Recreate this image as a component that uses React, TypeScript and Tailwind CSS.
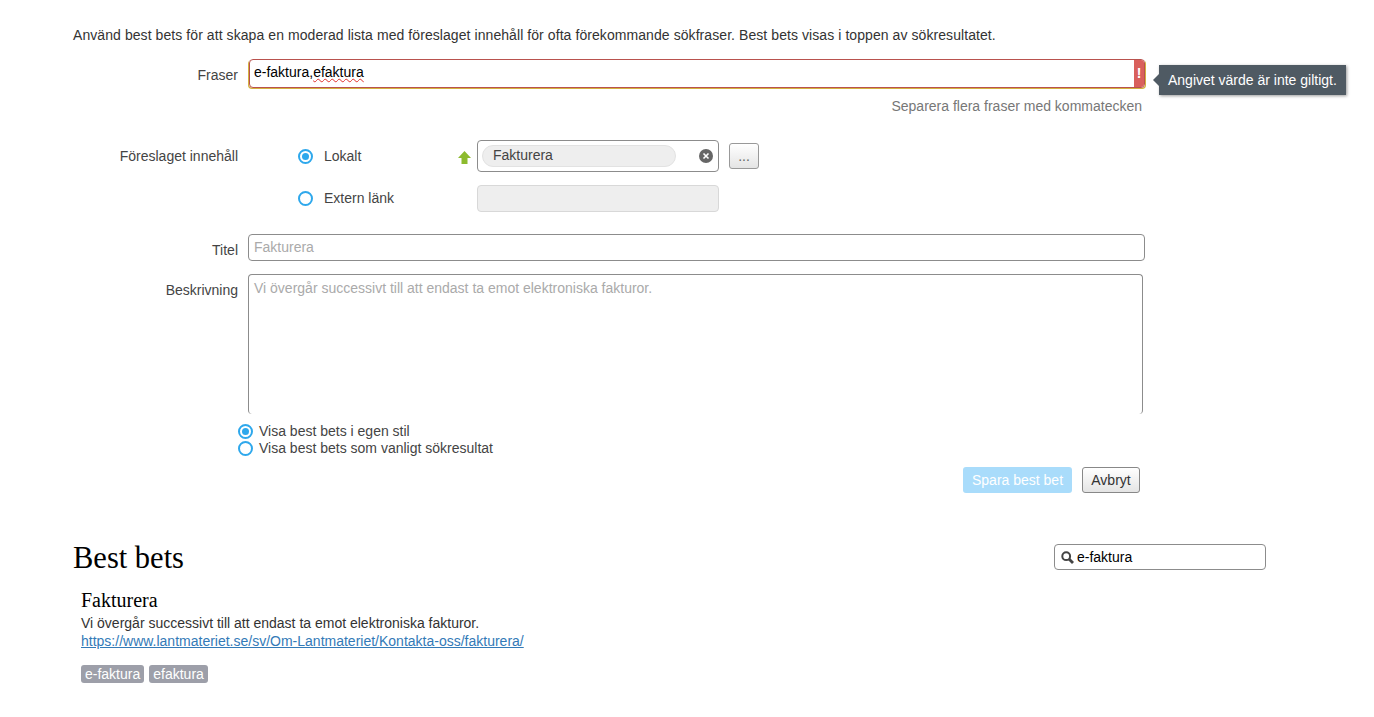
const sans = "font-['Liberation_Sans',Arial,sans-serif]"

function Radio({ checked }: { checked?: boolean }) {
  return (
    <span className="flex h-[15px] w-[15px] shrink-0 items-center justify-center rounded-full border-2 border-[#2ea8ec] bg-white">
      {checked && <span className="h-[7px] w-[7px] rounded-full bg-[#2ea8ec]" />}
    </span>
  )
}

function Label({ children }: { children: React.ReactNode }) {
  return <div className="w-[165px] shrink-0 text-right text-[#444]">{children}</div>
}

function BestBetForm() {
  return (
    <form className="w-[1146px]">
      <p className="tracking-[0.073px] text-[#333]">
        Använd best bets för att skapa en moderad lista med föreslaget innehåll för ofta förekommande sökfraser. Best bets visas i toppen av sökresultatet.
      </p>

      <div className="mt-[15px] flex">
        <Label><span className="mt-[8px] block">Fraser</span></Label>
        <div className="ml-[11px] flex h-[29px] w-[896px] overflow-hidden rounded-[4px] border border-[#b9524e] shadow-[-1px_1px_0_#d4b13f,1px_1px_0_#d4b13f]">
          <div className="flex-1 pl-[4px] pt-[4px] text-black">
            e-faktura,<span className="underline decoration-[#e0302a] decoration-wavy decoration-1">efaktura</span>
          </div>
          <div className="flex w-[10px] items-center justify-center bg-[#d9605c] pb-[1px] text-[14px] font-bold text-white">!</div>
        </div>
      </div>
      <p className="mt-[10px] w-[1069px] text-right text-[#777]">Separera flera fraser med kommatecken</p>

      <div className="mt-[25px] flex">
        <Label><span className="mt-[8px] block">Föreslaget innehåll</span></Label>
        <div className="ml-[60px] flex w-[150px] flex-col">
          <div className="flex h-[32px] items-center gap-[11px]">
            <Radio checked />
            <span className="text-[#444]">Lokalt</span>
          </div>
          <div className="mt-[13px] flex h-[27px] items-center gap-[11px]">
            <Radio />
            <span className="text-[#444]">Extern länk</span>
          </div>
        </div>
        <div className="flex flex-col">
          <div className="flex items-center">
            <svg className="ml-[10px] mt-[2px] h-[13px] w-[13px]" viewBox="0 0 13 13">
              <path d="M6.5 0 13 7H9.5v6h-6V7H0z" fill="#8dbb2e" />
            </svg>
            <div className="ml-[6px] flex h-[32px] w-[242px] items-center rounded-[4px] border border-[#8c8c8c] pl-[4px] pr-[5px]">
              <span className="flex h-[22px] w-[194px] items-center rounded-full border border-[#e2e2e2] bg-[#eeeeee] pb-[1px] pl-[10px] text-[#444]">Fakturera</span>
              <svg className="ml-auto h-[14px] w-[14px]" viewBox="0 0 14 14">
                <circle cx="7" cy="7" r="7" fill="#666" />
                <path d="M4.5 4.5l5 5M9.5 4.5l-5 5" stroke="#fff" strokeWidth="1.6" />
              </svg>
            </div>
            <button type="button" className="ml-[10px] h-[26px] w-[30px] rounded-[3px] border border-[#999] bg-gradient-to-b from-white to-[#e4e4e4] text-[#666]">...</button>
          </div>
          <div className="ml-[29px] mt-[13px] h-[27px] w-[242px] rounded-[4px] border border-[#d8d8d8] bg-[#eeeeee]" />
        </div>
      </div>

      <div className="mt-[22px] flex">
        <Label><span className="mt-[8px] block">Titel</span></Label>
        <input readOnly placeholder="Fakturera" className="ml-[10px] h-[27px] w-[897px] rounded-[4px] border border-[#8c8c8c] px-[5px] pb-[2px] placeholder:text-[#aaa]" />
      </div>

      <div className="mt-[13px] flex">
        <Label><span className="mt-[8px] block">Beskrivning</span></Label>
        <textarea readOnly placeholder="Vi övergår successivt till att endast ta emot elektroniska fakturor." className="ml-[10px] h-[140px] w-[895px] resize-none rounded-[4px] border border-b-0 border-[#8c8c8c] px-[5px] py-[5px] placeholder:text-[#aaa]" />
      </div>

      <div className="ml-[165px] mt-[9px] flex flex-col text-[#444]">
        <div className="flex h-[17px] items-center gap-[6px]"><Radio checked />Visa best bets i egen stil</div>
        <div className="flex h-[17px] items-center gap-[6px]"><Radio />Visa best bets som vanligt sökresultat</div>
      </div>

      <div className="mt-[10px] flex w-[1067px] justify-end gap-[10px]">
        <button type="button" className="h-[26px] w-[109px] rounded-[3px] bg-[#a9dcfb] text-white">Spara best bet</button>
        <button type="button" className="h-[26px] w-[58px] rounded-[3px] border border-[#888] bg-gradient-to-b from-white to-[#e4e4e4] text-[#333]">Avbryt</button>
      </div>
    </form>
  )
}

function BestBets() {
  return (
    <section className="mt-[51px]">
      <div className="flex w-[1193px] items-start justify-between">
        <h2 className="mt-[-1px] font-['Liberation_Serif',Georgia,serif] text-[30.5px] leading-[30px] text-black">Best bets</h2>
        <div className="flex h-[26px] w-[212px] items-center rounded-[4px] border border-[#8c8c8c] pl-[6px] text-black">
          <svg className="h-[13px] w-[13px]" viewBox="0 0 13 13" fill="none" stroke="#444" strokeWidth="2">
            <circle cx="5.2" cy="5.2" r="3.9" />
            <path d="M8 8l4 4" strokeWidth="2.8" />
          </svg>
          <span className="ml-[3px]">e-faktura</span>
        </div>
      </div>
      <div className="ml-[8px] mt-[16px]">
        <h3 className="font-['Liberation_Serif',Georgia,serif] text-[20px] leading-[22px] text-black">Fakturera</h3>
        <p className="mt-[4px] leading-[17px] text-[#333]">Vi övergår successivt till att endast ta emot elektroniska fakturor.</p>
        <a href="#" className="mt-[1px] block leading-[17px] text-[#337ab7] underline">https://www.lantmateriet.se/sv/Om-Lantmateriet/Kontakta-oss/fakturera/</a>
        <div className="mt-[15px] flex gap-[5px]">
          <span className="rounded-[3px] bg-[#9d9fa9] px-[4px] leading-[18px] text-white">e-faktura</span>
          <span className="rounded-[3px] bg-[#9d9fa9] px-[4px] leading-[18px] text-white">efaktura</span>
        </div>
      </div>
    </section>
  )
}

export default function App() {
  return (
    <div className={`relative min-h-[717px] bg-white pl-[73px] pt-[27px] text-[14px] leading-[17px] ${sans}`}>
      <BestBetForm />
      <BestBets />
      <div className="absolute left-[1159px] top-[65px] flex h-[30px] items-center bg-[#4f5a63] px-[9px] text-white shadow-[1px_1px_3px_rgba(0,0,0,0.4)]">
        <span className="absolute left-[-6px] top-[9px] h-0 w-0 border-y-[6px] border-r-[6px] border-y-transparent border-r-[#4f5a63]" />
        Angivet värde är inte giltigt.
      </div>
    </div>
  )
}
